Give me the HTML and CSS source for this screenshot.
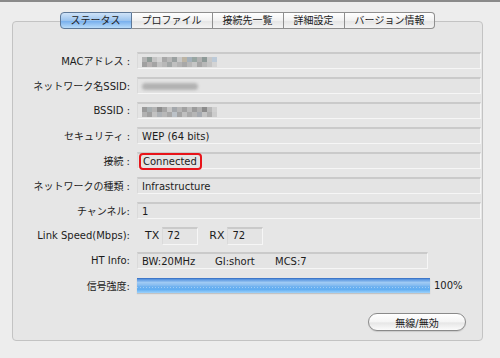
FILE: index.html
```html
<!DOCTYPE html>
<html lang="ja">
<head>
  <meta charset="UTF-8" />
  <meta name="viewport" content="width=device-width, initial-scale=1.0" />
  <title>ステータス</title>
  <link rel="stylesheet" href="styles.css">
</head>
<body>
  <div class="group">
    <div class="tabs">
      <span class="tab active">ステータス</span>
      <span class="tab">プロファイル</span>
      <span class="tab">接続先一覧</span>
      <span class="tab">詳細設定</span>
      <span class="tab">バージョン情報</span>
    </div>

    <div class="rows">
      <div class="label">MACアドレス :</div>
      <div class="field"><span class="mosaic mac"></span></div>

      <div class="label">ネットワーク名SSID:</div>
      <div class="field"><span class="blur"></span></div>

      <div class="label">BSSID :</div>
      <div class="field"><span class="mosaic bssid"></span></div>

      <div class="label">セキュリティ :</div>
      <div class="field">WEP (64 bits)</div>

      <div class="label">接続 :</div>
      <div class="field"><span class="mark">Connected</span></div>

      <div class="label">ネットワークの種類 :</div>
      <div class="field">Infrastructure</div>

      <div class="label">チャンネル:</div>
      <div class="field">1</div>

      <div class="label">Link Speed(Mbps):</div>
      <div class="speed">
        <span class="tx">TX</span>
        <span class="field small">72</span>
        <span class="rx">RX</span>
        <span class="field small">72</span>
      </div>

      <div class="label">HT Info:</div>
      <div class="field ht">
        <span class="bw">BW:20MHz</span>
        <span class="gi">GI:short</span>
        <span>MCS:7</span>
      </div>

      <div class="label">信号強度:</div>
      <div class="signal">
        <div class="bar"></div>
        <span class="pct">100%</span>
      </div>
    </div>

    <div class="actions">
      <button type="button">無線/無効</button>
    </div>
  </div>
</body>
</html>
```

FILE: styles.css
```css
html, body {
  margin: 0;
  height: 100%;
}

body {
  background: #ededed;
  border-top: 2px solid #8a8a8a;
  box-sizing: border-box;
  font-family: "DejaVu Sans", "Noto Sans CJK JP", sans-serif;
  font-size: 10px;
  color: #1c1c1c;
}

.group {
  box-sizing: border-box;
  margin: 19px 0 0 12px;
  width: 471px;
  height: 320px;
  background: #e6e6e6;
  border: 1px solid #c3c3c3;
  border-radius: 4px;
}

/* tab strip sits on the group border */
.tabs {
  display: flex;
  justify-content: center;
  margin-top: -10px;
  height: 17px;
}

.tab {
  box-sizing: border-box;
  height: 17px;
  line-height: 15px;
  padding: 0 10px;
  border: 1px solid #8e8e8e;
  border-left: none;
  background: linear-gradient(#ffffff, #f1f1f1 50%, #e4e4e4 51%, #f3f3f3);
  white-space: nowrap;
}

.tab:first-child {
  border-left: 1px solid #6b7f9a;
  border-radius: 4px 0 0 4px;
}

.tab:last-child {
  border-radius: 0 4px 4px 0;
}

.tab.active {
  border-color: #5d7898;
  background: linear-gradient(#cfe3f8, #9cc4ee 50%, #73acec 51%, #b9dcfa);
}

.rows {
  display: grid;
  grid-template-columns: 117px 1fr;
  grid-auto-rows: 25px;
  column-gap: 7px;
  align-items: center;
  margin-top: 19px;
  margin-right: 1px;
}

.label {
  text-align: right;
  white-space: nowrap;
}

.field {
  box-sizing: border-box;
  display: flex;
  align-items: center;
  height: 17px;
  padding-left: 4px;
  background: #e4e4e4;
  border-top: 2px solid #cacaca;
  border-left: 1px solid #dadada;
  border-right: 1px solid #f6f6f6;
  border-bottom: 1px solid #f6f6f6;
  white-space: nowrap;
}

.mosaic {
  display: block;
  width: 75px;
  height: 10px;
  margin-top: 1px;
}

.mac {
  background:
    linear-gradient(90deg, #b4b4b4 0 5px, #8f9b97 5px 10px, #c4c4c4 10px 15px, #d2d2d2 15px 20px, #a8a8a8 20px 25px, #b8b8b8 25px 30px, #9ba1a1 30px 35px, #c8c8c8 35px 40px, #bcb4a4 40px 45px, #a4b0ba 45px 50px, #98a6a2 50px 55px, #b2b2b2 55px 60px, #8e9a98 60px 65px, #c8c8c8 65px 70px, #bccad8 70px 75px) top / 100% 5px no-repeat,
    linear-gradient(90deg, #a0a0a0 0 5px, #b6b2b2 5px 10px, #a4a4a4 10px 15px, #c2c2c2 15px 20px, #b8b8b8 20px 25px, #a2a6a6 25px 30px, #c0c0c0 30px 35px, #b4b4b4 35px 40px, #a8a8a8 40px 45px, #b8b8b8 45px 50px, #c6c6c6 50px 55px, #a6a6a6 55px 60px, #b8b8b8 60px 65px, #c4c4c4 65px 70px, #d4d4d4 70px 75px) bottom / 100% 5px no-repeat;
}

.bssid {
  background:
    linear-gradient(90deg, #9a9a9a 0 5px, #a8aeb0 5px 10px, #b4b4b4 10px 15px, #8e8e8e 15px 20px, #a6a6a6 20px 25px, #c6c6c6 25px 30px, #a4a8ac 30px 35px, #b6b6b6 35px 40px, #a2a2a2 40px 45px, #bababa 45px 50px, #9c9c9c 50px 55px, #b0b0b0 55px 60px, #8c8c8c 60px 65px, #b8b8b8 65px 70px, #d0d0d0 70px 75px) top / 100% 5px no-repeat,
    linear-gradient(90deg, #b2b2b2 0 5px, #a0a0a0 5px 10px, #c2c2c2 10px 15px, #aeb2b6 15px 20px, #b8b8b8 20px 25px, #a8a8a8 25px 30px, #bcc2c8 30px 35px, #a4a4a4 35px 40px, #c0c0c0 40px 45px, #aaaaaa 45px 50px, #b6b6b6 50px 55px, #a6aab0 55px 60px, #c4c4c4 60px 65px, #aeaeae 65px 70px, #cccccc 70px 75px) bottom / 100% 5px no-repeat;
}

.blur {
  display: block;
  width: 56px;
  height: 7px;
  border-radius: 4px;
  background: #b2b2b2;
  filter: blur(1.5px);
}

.mark {
  box-sizing: border-box;
  height: 17px;
  line-height: 13px;
  margin-left: -3px;
  padding: 0 3px 0 2px;
  border: 2px solid #e8141a;
  border-radius: 4px;
}

.speed {
  display: flex;
  align-items: center;
}

.tx {
  margin-left: 8px;
  font-size: 11px;
}

.rx {
  margin-left: 11px;
  font-size: 11px;
}

.field.small {
  width: 36px;
  height: 18px;
  margin-left: 3px;
  align-items: flex-start;
  padding-top: 1px;
}

.field.ht {
  width: 291px;
}

.bw {
  width: 73px;
}

.gi {
  width: 60px;
}

.signal {
  display: flex;
  align-items: center;
}

.bar {
  width: 293px;
  height: 15px;
  border-top: 1px solid #3f77c8;
  box-sizing: border-box;
  background:
    repeating-linear-gradient(90deg, rgba(255,255,255,0.35) 0 1px, transparent 1px 3px) 0 8px / 100% 1px no-repeat,
    linear-gradient(#4f8ddc, #9fcaf4 25%, #86bcf0 45%, #6cb0ef 55%, #62aef2 75%, #9ed2fa);
  box-shadow: 0 1px 1px rgba(0,0,0,0.15);
}

.pct {
  margin-left: 4px;
}

.actions {
  display: flex;
  justify-content: flex-end;
  margin-top: 15px;
  margin-right: 16px;
}

button {
  width: 98px;
  height: 18px;
  padding: 0;
  font-family: "DejaVu Sans", "Noto Sans CJK JP", sans-serif;
  font-size: 10px;
  color: #1c1c1c;
  border: 1px solid #8a8a8a;
  border-radius: 9px;
  background: linear-gradient(#ffffff, #f4f4f4 50%, #e6e6e6 55%, #fbfbfb);
  box-shadow: 0 1px 1px rgba(0,0,0,0.12);
}
```
